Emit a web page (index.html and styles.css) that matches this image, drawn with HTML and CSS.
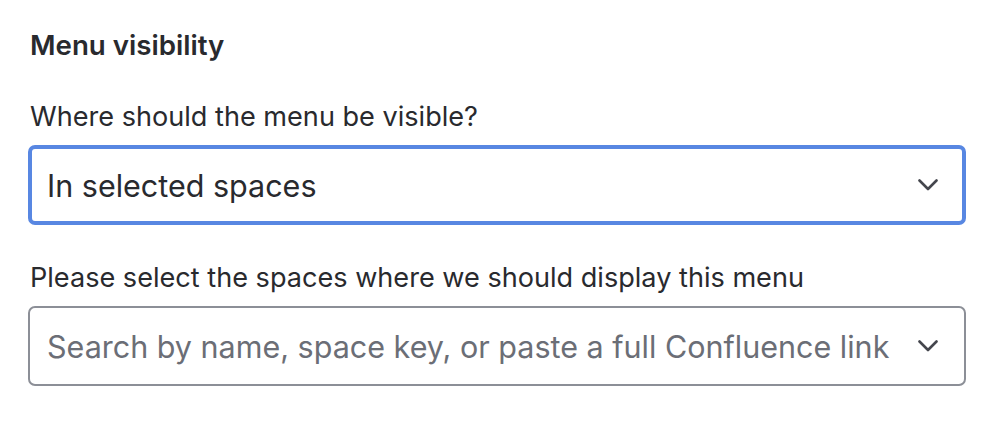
FILE: index.html
```html
<!DOCTYPE html>
<html>
<head>
<meta charset="utf-8">
<link rel="stylesheet" href="styles.css">
</head>
<body>
<div class="panel">
  <h2 class="heading">Menu visibility</h2>
  <div class="field field-first">
    <label class="label">Where should the menu be visible?</label>
    <div class="select select-focused">
      <span class="value">In selected spaces</span>
      <svg class="chevron" width="20" height="12" viewBox="0 0 20 12"><path d="M1.5 1.5 L10 10 L18.5 1.5" fill="none" stroke="#44464d" stroke-width="2.6" stroke-linecap="round" stroke-linejoin="round"/></svg>
    </div>
  </div>
  <div class="field field-second">
    <label class="label">Please select the spaces where we should display this menu</label>
    <div class="select">
      <span class="placeholder">Search by name, space key, or paste a full Confluence link</span>
      <svg class="chevron" width="20" height="12" viewBox="0 0 20 12"><path d="M1.5 1.5 L10 10 L18.5 1.5" fill="none" stroke="#44464d" stroke-width="2.6" stroke-linecap="round" stroke-linejoin="round"/></svg>
    </div>
  </div>
</div>
</body>
</html>
```
FILE: styles.css
```css
html, body {
  margin: 0;
  padding: 0;
  background: #ffffff;
}
body {
  font-family: Inter, "Noto Sans", "Liberation Sans", sans-serif;
  color: #292a2e;
}
.panel {
  width: 938px;
  padding: 29px 0 0 28px;
}
.heading {
  margin: 0;
  font-size: 27.7px;
  font-weight: 600;
  line-height: 32px;
  padding-left: 2px;
}
.field {
  display: flex;
  flex-direction: column;
  gap: 12px;
}
.field-first {
  margin-top: 40px;
}
.field-second {
  margin-top: 37px;
}
.label {
  font-size: 27.1px;
  line-height: 32px;
  padding-left: 2px;
}
.select {
  box-sizing: border-box;
  height: 80px;
  border: 2px solid #8c8f97;
  border-radius: 7px;
  display: flex;
  align-items: center;
  justify-content: space-between;
  padding: 0 26px 0 17px;
  font-size: 30.5px;
}
.select-focused {
  border: 4px solid #5887e2;
  padding: 0 24px 0 15px;
}
.value {
  color: #292a2e;
}
.placeholder {
  color: #6b6e76;
}
.chevron {
  display: block;
  flex: none;
}
```
